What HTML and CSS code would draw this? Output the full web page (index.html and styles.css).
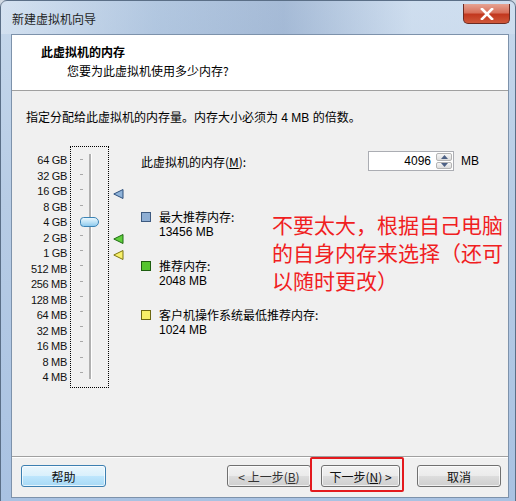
FILE: index.html
```html
<!DOCTYPE html>
<html lang="zh-CN">
<head>
  <meta charset="UTF-8">
  <title>新建虚拟机向导</title>
  <link rel="stylesheet" href="styles.css">
</head>
<body>
  <div class="window">
    <!-- Title bar -->
    <div class="titlebar">
      <span class="title-text">新建虚拟机向导</span>
      <div class="close-btn">
        <svg width="14" height="12" viewBox="0 0 14 12">
          <path d="M2 1 L12 11 M12 1 L2 11" stroke="#fff" stroke-width="2.6" stroke-linecap="square"/>
        </svg>
      </div>
    </div>

    <div class="client">
      <!-- Header -->
      <div class="wizard-header">
        <div class="header-title">此虚拟机的内存</div>
        <div class="header-sub">您要为此虚拟机使用多少内存?</div>
      </div>

      <!-- Body -->
      <div class="wizard-body">
        <div class="intro">指定分配给此虚拟机的内存量。内存大小必须为 4 MB 的倍数。</div>

        <div class="memory-row">
          <div class="scale-labels">
            <span>64 GB</span><span>32 GB</span><span>16 GB</span><span>8 GB</span>
            <span>4 GB</span><span>2 GB</span><span>1 GB</span><span>512 MB</span>
            <span>256 MB</span><span>128 MB</span><span>64 MB</span><span>32 MB</span>
            <span>16 MB</span><span>8 MB</span><span>4 MB</span>
          </div>

          <div class="slider-box">
            <div class="ticks">
              <i></i><i></i><i></i><i></i><i></i><i></i><i></i><i></i>
              <i></i><i></i><i></i><i></i><i></i><i></i><i></i>
            </div>
            <div class="track"></div>
            <div class="thumb"></div>
          </div>

          <div class="markers">
            <svg class="marker marker-max" width="11" height="10" viewBox="0 0 11 10">
              <polygon points="10,0.5 10,9.5 0.8,5" fill="#8fb3d9" stroke="#2d4f7c" stroke-width="1"/>
            </svg>
            <svg class="marker marker-rec" width="11" height="10" viewBox="0 0 11 10">
              <polygon points="10,0.5 10,9.5 0.8,5" fill="#5fcf3c" stroke="#1f6b12" stroke-width="1"/>
            </svg>
            <svg class="marker marker-min" width="11" height="10" viewBox="0 0 11 10">
              <polygon points="10,0.5 10,9.5 0.8,5" fill="#f8f06a" stroke="#7a7410" stroke-width="1"/>
            </svg>
          </div>

          <div class="mem-panel">
            <div class="mem-input-row">
              <span>此虚拟机的内存(<u>M</u>):</span>
              <div class="spin">
                <div class="spin-value">4096</div>
                <div class="spin-buttons">
                  <div class="spin-btn">
                    <svg width="7" height="4" viewBox="0 0 7 4"><polygon points="0,4 7,4 3.5,0" fill="#4d6185"/></svg>
                  </div>
                  <div class="spin-btn">
                    <svg width="7" height="4" viewBox="0 0 7 4"><polygon points="0,0 7,0 3.5,4" fill="#4d6185"/></svg>
                  </div>
                </div>
              </div>
              <span class="unit">MB</span>
            </div>

            <div class="legend">
              <div class="legend-item">
                <span class="swatch swatch-max"></span>
                <div>
                  <div>最大推荐内存:</div>
                  <div class="legend-val">13456 MB</div>
                </div>
              </div>
              <div class="legend-item">
                <span class="swatch swatch-rec"></span>
                <div>
                  <div>推荐内存:</div>
                  <div class="legend-val">2048 MB</div>
                </div>
              </div>
              <div class="legend-item">
                <span class="swatch swatch-min"></span>
                <div>
                  <div>客户机操作系统最低推荐内存:</div>
                  <div class="legend-val">1024 MB</div>
                </div>
              </div>
            </div>
          </div>
        </div>

        <div class="note">不要太大，根据自己电脑的自身内存来选择（还可以随时更改）</div>
      </div>

      <!-- Footer -->
      <div class="wizard-footer">
        <button class="btn btn-help">帮助</button>
        <div class="footer-right">
          <button class="btn btn-back">&lt; 上一步(<u>B</u>)</button>
          <button class="btn btn-next">下一步(<u>N</u>) &gt;</button>
          <button class="btn btn-cancel">取消</button>
        </div>
      </div>
    </div>
  </div>
</body>
</html>
```

FILE: styles.css
```css
:root {
  --ui-font: "Liberation Sans", "Noto Sans CJK SC", sans-serif;
  --face: #f0f0f0;
  --frame: #b4cae4;
}
body {
  margin: 0;
  padding: 0;
  background: #cfd8e2;
  font-family: var(--ui-font);
  font-size: 12px;
  color: #000;
}
.window {
  width: 516px;
  height: 501px;
  box-sizing: border-box;
  display: flex;
  flex-direction: column;
  background: linear-gradient(180deg, #c6d8ec 0%, #b7cce5 40%, #a9c2e2 100%);
  border: 1px solid #5b6f87;
  border-bottom: none;
  border-radius: 7px 7px 0 0;
  position: relative;
}
/* Title bar */
.titlebar {
  height: 33px;
  display: flex;
  align-items: flex-start;
  justify-content: space-between;
  padding-left: 11px;
  background: linear-gradient(90deg, rgba(255,255,255,0.25) 0%, rgba(120,150,190,0.25) 30%, rgba(70,100,150,0.25) 55%, rgba(255,255,255,0.15) 80%);
}
.title-text {
  margin-top: 9px;
  font-size: 12px;
  color: #1e1e1e;
  font-family: "Noto Sans CJK SC", sans-serif;
}
.close-btn {
  width: 47px;
  height: 20px;
  margin: 3px 5px 0 0;
  box-sizing: border-box;
  border: 1px solid #6b2b22;
  border-top: none;
  border-radius: 0 0 5px 5px;
  background: linear-gradient(180deg, #e6a392 0%, #d8715c 45%, #c2381f 55%, #d0583a 100%);
  display: flex;
  align-items: center;
  justify-content: center;
}
/* Client */
.client {
  flex: 1;
  margin: 0 6px 3px 10px;
  border: 1px solid #7d92ab;
  background: var(--face);
  display: flex;
  flex-direction: column;
}
.wizard-header {
  height: 56px;
  background: #fff;
  border-bottom: 1px solid #a0a0a0;
  padding: 9px 0 0 29px;
  box-sizing: border-box;
}
.header-title {
  font-weight: bold;
  font-size: 12px;
  font-family: "Noto Sans CJK SC", sans-serif;
  line-height: 16px;
}
.header-sub {
  padding-left: 26px;
  margin-top: 3px;
  line-height: 16px;
  font-family: "Noto Sans CJK SC", sans-serif;
}
.wizard-body {
  flex: 1;
  position: relative;
  padding: 19px 0 0 14px;
  border-bottom: 1px solid #a0a0a0;
  box-shadow: 0 1px 0 #fff;
}
.intro {
  line-height: 16px;
}
.memory-row {
  display: flex;
  align-items: flex-start;
  margin-top: 20px;
}
.scale-labels {
  width: 41px;
  padding-top: 7px;
  display: flex;
  flex-direction: column;
  align-items: flex-end;
  font-size: 11px;
  letter-spacing: -0.3px;
  color: #111;
}
.scale-labels span {
  height: 15.5px;
  line-height: 15.5px;
  white-space: nowrap;
}
.slider-box {
  width: 39px;
  height: 242px;
  margin-left: 3px;
  box-sizing: border-box;
  border: 1px dotted #000;
  position: relative;
  display: flex;
}
.ticks {
  width: 12px;
  padding-top: 12px;
  display: flex;
  flex-direction: column;
  align-items: flex-end;
}
.ticks i {
  display: block;
  width: 3px;
  height: 1px;
  background: #a8a8a8;
  margin-bottom: 14.5px;
}
.track {
  width: 2px;
  margin: 7px 0 8px 6px;
  background: #b0b0b0;
  border-right: 1px solid #fff;
}
.thumb {
  position: absolute;
  left: 9px;
  top: 70px;
  width: 19px;
  height: 10px;
  box-sizing: border-box;
  border: 1px solid #3b83b5;
  border-radius: 5px 7px 7px 5px;
  background: linear-gradient(180deg, #e8f6fd 0%, #bfe3f6 50%, #8fcbee 100%);
}
.markers {
  width: 32px;
  height: 242px;
  position: relative;
}
.marker {
  position: absolute;
  left: 4px;
}
.marker-max { top: 43px; }
.marker-rec { top: 88px; }
.marker-min { top: 104px; }
.mem-panel {
  flex: 1;
  padding-right: 28px;
}
.mem-input-row {
  display: flex;
  align-items: center;
  margin-top: 5px;
}
.mem-input-row > span:first-child {
  flex: 1;
  font-family: "Noto Sans CJK SC", sans-serif;
}
.spin {
  width: 86px;
  height: 20px;
  box-sizing: border-box;
  border: 1px solid #abadb3;
  background: #fff;
  display: flex;
}
.spin-value {
  flex: 1;
  text-align: right;
  padding-right: 4px;
  line-height: 18px;
}
.spin-buttons {
  width: 16px;
  display: flex;
  flex-direction: column;
  gap: 1px;
  padding: 1px;
}
.spin-btn {
  flex: 1;
  border: 1px solid #b4b4b4;
  border-radius: 2px;
  background: linear-gradient(180deg, #f6f6f6, #dcdcdc);
  display: flex;
  align-items: center;
  justify-content: center;
}
.unit {
  margin-left: 7px;
  width: 19px;
}
.legend {
  margin-top: 38px;
  display: flex;
  flex-direction: column;
  gap: 18px;
}
.legend-item {
  display: flex;
  align-items: flex-start;
  gap: 8px;
  line-height: 15px;
  font-family: "Noto Sans CJK SC", sans-serif;
}
.legend-val {
  font-family: var(--ui-font);
  margin-top: 1px;
}
.swatch {
  width: 8px;
  height: 8px;
  margin-top: 3px;
  border: 1px solid #333;
}
.swatch-max { background: #8eaed3; border-color: #3d5a80; }
.swatch-rec { background: #54c42e; border-color: #1d5e10; }
.swatch-min { background: #f8f068; border-color: #6d6712; }
/* Red annotation pasted over the dialog */
.note {
  position: absolute;
  left: 260px;
  top: 119px;
  width: 236px;
  font-family: "Noto Sans CJK SC", sans-serif;
  font-size: 21px;
  line-height: 28px;
  color: #f0201f;
}
/* Footer */
.wizard-footer {
  height: 40px;
  display: flex;
  align-items: center;
  justify-content: space-between;
  padding: 0 7px 2px 9px;
  box-sizing: border-box;
}
.footer-right {
  display: flex;
}
.btn {
  width: 85px;
  height: 22px;
  padding: 0;
  font-family: "Noto Sans CJK SC", sans-serif;
  font-size: 12px;
  color: #111;
  border: 1px solid #707070;
  border-radius: 3px;
  background: linear-gradient(180deg, #f2f2f2 0%, #ebebeb 49%, #dddddd 50%, #cfcfcf 100%);
  box-shadow: inset 0 0 0 1px rgba(255,255,255,0.7);
}
.btn-help {
  border-color: #3c7fb1;
  background: linear-gradient(180deg, #eaf6fd 0%, #d9f0fc 49%, #bee6fd 50%, #a7d9f5 100%);
}
.btn-back {
  width: 84px;
  margin-right: 10px;
  color: #333;
}
.btn-next {
  width: 79px;
  margin-right: 17px;
  position: relative;
}
.btn-cancel {
  width: 84px;
}
.btn-next::after {
  content: "";
  position: absolute;
  left: -12px;
  top: -9px;
  right: -5px;
  bottom: -6px;
  border: 2px solid #e3191d;
  border-radius: 2px;
}
```
